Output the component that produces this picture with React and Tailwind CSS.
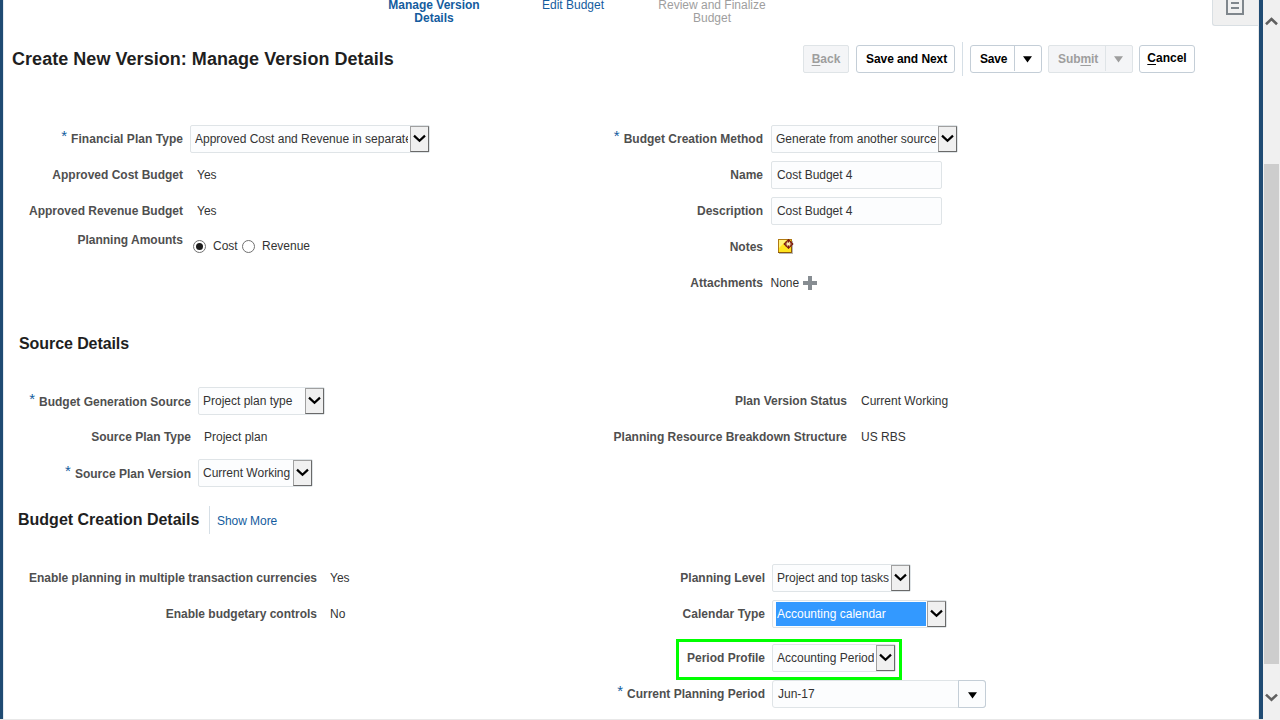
import React from "react";

const Chevron = ({ className = "", up = false, color = "#000", sw = 2.2 }) => (
  <svg className={className} width="13" height="9" viewBox="0 0 13 9">
    <path
      d={up ? "M1 7.2 L6.5 2 L12 7.2" : "M1 1.6 L6.5 6.8 L12 1.6"}
      fill="none"
      stroke={color}
      strokeWidth={sw}
    />
  </svg>
);

const Triangle = ({ className = "" }) => (
  <svg className={className} width="9" height="7" viewBox="0 0 9 7">
    <path d="M0 0.3 H9 L4.5 6.6 Z" fill="currentColor" />
  </svg>
);

const Row = ({ label, required = false, labelClass, valueClass = "", textClass = "", children }) => (
  <div className="flex h-7 items-center">
    <div className={`flex shrink-0 justify-end whitespace-nowrap font-bold text-[#4f4f4f] ${labelClass}`}>
      {required && (
        <span className="relative -top-[3px] mr-[4px] text-[15px] font-normal text-[#145c9e]">*</span>
      )}
      <span className={textClass}>{label}</span>
    </div>
    <div className={`flex items-center ${valueClass}`}>{children}</div>
  </div>
);

const Select = ({ value, width, textClass = "", active = false }) => (
  <div className={`flex h-7 rounded-[2px] border border-[#dfe4e7] bg-[#fcfdfe] ${width}`}>
    <div className={`min-w-0 flex-1 ${active ? "py-px pl-[3px] pr-px" : "pl-[4px] pr-[2px]"}`}>
      <div
        className={`overflow-hidden whitespace-nowrap ${
          active ? "h-6 bg-[#3399ff] pl-px leading-6 text-white" : "h-[26px] leading-[26px]"
        }`}
      >
        <span className={textClass}>{value}</span>
      </div>
    </div>
    <div className="flex w-[19px] shrink-0 justify-center border border-[#696969] border-l-[#a0a0a0] border-t-[#a0a0a0] bg-[#f0f0f0] pt-[7px]">
      <Chevron />
    </div>
  </div>
);

const Input = ({ value }) => (
  <div className="h-7 w-[171px] rounded-[2px] border border-[#dfe4e7] bg-[#fcfdfe] pl-[5px] leading-[26px] tracking-[-0.05px]">
    {value}
  </div>
);

const Radio = ({ checked = false }) => (
  <span className="flex h-[13px] w-[13px] items-center justify-center rounded-full border border-[#707070] bg-white">
    {checked && <span className="h-[7px] w-[7px] rounded-full bg-[#1c1c1c]" />}
  </span>
);

const NoteIcon = () => (
  <svg width="17" height="16" viewBox="0 0 17 16">
    <rect x="2" y="2" width="14" height="13" fill="#b9b9b9" />
    <rect x="1.5" y="0.5" width="13" height="13" fill="#ffe41f" stroke="#b07a12" />
    <path d="M2 1 H10 L2 9 Z" fill="#fff27a" />
    <path d="M14.5 8 V13.5 H1" fill="none" stroke="#8f5a0a" />
    <path d="M11.5 0.8 L15.7 5 L11.5 9.2 L7.3 5 Z" fill="#fff3b8" stroke="#7a1a10" strokeWidth="1.3" />
    <path d="M11.5 0.5 V3.6 M11.5 6.4 V9.5 M7 5 H10.1 M12.9 5 H16" stroke="#7a1a10" strokeWidth="1" />
    <path d="M9 2.5 L10.2 3.7 M14 2.5 L12.8 3.7 M9 7.5 L10.2 6.3 M14 7.5 L12.8 6.3" stroke="#7a1a10" strokeWidth="0.8" />
  </svg>
);

const PlusIcon = () => (
  <svg width="14" height="14" viewBox="0 0 14 14">
    <path d="M5 0 H9 V5 H14 V9 H9 V14 H5 V9 H0 V5 H5 Z" fill="#878d92" />
  </svg>
);

const Divider = ({ className = "bg-[#d6dfe6]" }) => <span className={`w-px ${className}`} />;

const enabledButton = "rounded-[3px] border border-[#c4ced7] bg-white text-black";
const disabledButton = "rounded-[2px] border border-[#dfe4e7] bg-[#f4f5f7] text-[#9e9e9e]";

function TrainSteps() {
  return (
    <div className="flex h-[26px] justify-between">
      <div className="flex pl-[370px] text-center leading-[13px]">
        <div className="-mt-[1px] w-[120px] font-bold text-[#145c9e]">
          Manage Version
          <br />
          Details
        </div>
        <div className="-mt-[1px] ml-[19px] w-[120px] text-[#145c9e]">Edit Budget</div>
        <div className="-mt-[1px] ml-[19px] w-[120px] text-[#9e9e9e]">
          Review and Finalize
          <br />
          Budget
        </div>
      </div>
      <div className="flex w-[46px] justify-start rounded-bl-[3px] border-b border-l border-[#d9dfe3] bg-[#f0f0f0] pl-[13px]">
        <svg width="18" height="15" viewBox="0 0 18 15">
          <path d="M1 -5 V14 H17 V-5" fill="none" stroke="#7f868c" strokeWidth="2" />
          <path d="M5 3 H13 M5 8 H13" stroke="#7f868c" strokeWidth="2" />
        </svg>
      </div>
    </div>
  );
}

function TitleBar() {
  return (
    <div className="flex h-[34px] items-center">
      <h1 className="w-[799px] pl-[8px] text-[18px] font-bold leading-[34px] tracking-[0.04px] text-[#1f1f1f]">
        Create New Version: Manage Version Details
      </h1>
      <div className="flex h-[34px] items-center font-bold leading-[26px]">
        <div className={`h-7 w-[46px] text-center ${disabledButton}`}>
          <u className="underline-offset-2">B</u>ack
        </div>
        <div className={`ml-[7px] h-7 w-[99px] pl-[9px] tracking-[-0.07px] ${enabledButton}`}>Save and Next</div>
        <Divider className="ml-[7px] h-[34px] bg-[#d6dfe6]" />
        <div className={`ml-[7px] flex h-7 w-[72px] ${enabledButton}`}>
          <span className="w-[43px] pl-[9px] tracking-[-0.2px]">Save</span>
          <Divider className="h-[25px] bg-[#c4ced7]" />
          <Triangle className="ml-[8px] mt-[10px]" />
        </div>
        <div className={`ml-[6px] flex h-7 w-[85px] ${disabledButton}`}>
          <span className="w-[56px] pl-[9px] tracking-[-0.1px]">
            Sub<u className="underline-offset-2">m</u>it
          </span>
          <Divider className="h-[25px] bg-[#dfe4e7]" />
          <Triangle className="ml-[8px] mt-[10px]" />
        </div>
        <div className={`ml-[6px] h-7 w-[56px] text-center leading-[24px] ${enabledButton}`}>
          <u className="underline-offset-2">C</u>ancel
        </div>
      </div>
    </div>
  );
}

function PlanSection() {
  const left = "w-[179px]";
  const right = "w-[184px]";
  return (
    <div className="flex h-[195px]">
      <div className="flex w-[575px] flex-col gap-2">
        <Row label="Financial Plan Type" required labelClass={left} valueClass="pl-[7px]" textClass="tracking-[0.04px]">
          <Select value="Approved Cost and Revenue in separate versions" width="w-[240px]" />
        </Row>
        <Row label="Approved Cost Budget" labelClass={left} valueClass="pl-[14px]">Yes</Row>
        <Row label="Approved Revenue Budget" labelClass={left} valueClass="pl-[14px]">Yes</Row>
        <div className="flex h-7">
          <div className="w-[179px] text-right font-bold leading-[14px] text-[#4f4f4f]">Planning Amounts</div>
          <div className="flex h-[26px] items-center pl-[10px]">
            <Radio checked />
            <span className="w-[36px] pl-[7px]">Cost</span>
            <Radio />
            <span className="pl-[7px]">Revenue</span>
          </div>
        </div>
      </div>
      <div className="flex flex-col gap-2">
        <Row label="Budget Creation Method" required labelClass={right} valueClass="pl-[8px]">
          <Select value="Generate from another source" width="w-[187px]" />
        </Row>
        <Row label="Name" labelClass={right} valueClass="pl-[8px]"><Input value="Cost Budget 4" /></Row>
        <Row label="Description" labelClass={right} valueClass="pl-[8px]"><Input value="Cost Budget 4" /></Row>
        <Row label="Notes" labelClass={right} valueClass="pl-[14px]"><NoteIcon /></Row>
        <Row label="Attachments" labelClass={right} valueClass="pl-[7px]">
          <span className="w-[33px] pl-[0.5px]">None</span>
          <PlusIcon />
        </Row>
      </div>
    </div>
  );
}

function SourceSection() {
  const left = "w-[187px]";
  return (
    <>
      <h2 className="h-[67px] pl-[15px] text-[16px] font-bold leading-[48px] tracking-[-0.08px] text-[#1f1f1f]">
        Source Details
      </h2>
      <div className="flex h-[117px]">
        <div className="flex w-[575px] flex-col gap-2">
          <Row label="Budget Generation Source" required labelClass={`${left} pt-[2px]`} valueClass="pl-[7px]">
            <Select value="Project plan type" width="w-[127px]" />
          </Row>
          <Row label="Source Plan Type" labelClass={left} valueClass="pl-[13px]">Project plan</Row>
          <Row label="Source Plan Version" required labelClass={`${left} pt-[2px]`} valueClass="pl-[7px]">
            <Select value="Current Working" width="w-[115px]" />
          </Row>
        </div>
        <div className="flex flex-col gap-2">
          <Row label="Plan Version Status" labelClass="w-[268px]" valueClass="pl-[14px]">Current Working</Row>
          <Row label="Planning Resource Breakdown Structure" labelClass="w-[268px]" valueClass="pl-[14px]">US RBS</Row>
        </div>
      </div>
    </>
  );
}

function CreationSection() {
  const left = "w-[313px]";
  const right = "w-[89px]";
  return (
    <>
      <div className="flex h-[60px] items-start pl-[14px]">
        <h2 className="w-[191px] text-[16px] font-bold leading-[31px] text-[#1f1f1f]">Budget Creation Details</h2>
        <Divider className="mt-[2px] h-[28px] bg-[#d6dfe6]" />
        <span className="pl-[7px] leading-[35px] tracking-[-0.05px] text-[#145c9e]">Show More</span>
      </div>
      <div className="flex">
        <div className="flex w-[604px] flex-col gap-2">
          <Row label="Enable planning in multiple transaction currencies" labelClass={left} valueClass="pl-[13px]">Yes</Row>
          <Row label="Enable budgetary controls" labelClass={left} valueClass="pl-[13px]">No</Row>
        </div>
        <div className="flex flex-col">
          <div className="flex flex-col gap-2 pl-[68px]">
            <Row label="Planning Level" labelClass={right} valueClass="pl-[7px]">
              <Select value="Project and top tasks" width="w-[139px]" />
            </Row>
            <Row label="Calendar Type" labelClass={right} valueClass="pl-[7px]" textClass="tracking-[0.05px]">
              <Select value="Accounting calendar" width="w-[175px]" active />
            </Row>
          </div>
          <div className="ml-[68px] mt-[11px] h-[41px] w-[226px] border-[3px] border-[#00ff00] pt-[2px]">
            <Row label="Period Profile" labelClass="w-[86px]" valueClass="pl-[7px]">
              <Select value="Accounting Period" width="w-[124px]" />
            </Row>
          </div>
          <Row label="Current Planning Period" required labelClass="w-[157px]" valueClass="pl-[7px]">
            <div className="flex h-7 w-[214px] rounded-[3px] border border-[#dfe4e7] bg-[#fcfdfe] leading-[26px]">
              <span className="flex-1 pl-[5px]">Jun-17</span>
              <span className="-my-px -mr-px flex w-[28px] justify-center rounded-r-[3px] border border-[#c4ced7] pt-[11px] text-black">
                <Triangle />
              </span>
            </div>
          </Row>
        </div>
      </div>
    </>
  );
}

function Scrollbar() {
  return (
    <div className="flex w-[17px] flex-col items-center bg-[#f0f0f0]">
      <Chevron up color="#606060" sw={2.6} className="mt-[17px]" />
      <div className="mt-[138px] h-[500px] w-[15px] bg-[#cdcdcd]" />
      <Chevron color="#606060" sw={2.6} className="mt-[29px]" />
    </div>
  );
}

export default function App() {
  return (
    <div className="flex h-[720px] w-[1280px] overflow-hidden bg-white font-['Liberation_Sans',Arial,sans-serif] text-[12px] leading-[14px] text-[#333]">
      <div className="flex flex-1 flex-col border-b border-[#e8e8e8]">
        <div className="flex h-[719px]">
          <div className="w-[3px] bg-[#1f4b73]" />
          <div className="w-px bg-[#e3eaf0]" />
          <main className="w-[1254px]">
            <TrainSteps />
            <div className="pt-[16px]">
              <TitleBar />
            </div>
            <div className="pt-[49px]">
              <PlanSection />
            </div>
            <SourceSection />
            <CreationSection />
          </main>
          <div className="w-px bg-[#e8e8e8]" />
          <div className="w-[4px] bg-[#1f4b73]" />
        </div>
      </div>
      <Scrollbar />
    </div>
  );
}
